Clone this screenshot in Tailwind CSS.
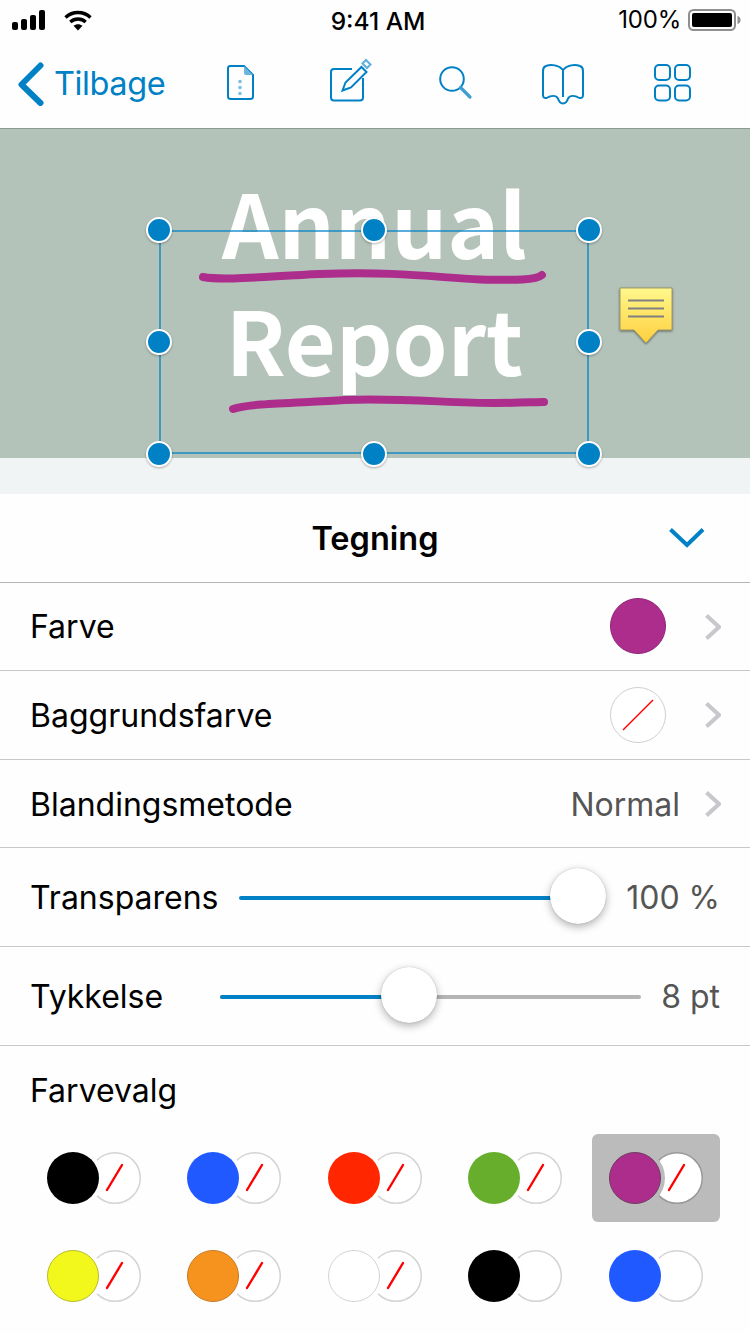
<!DOCTYPE html>
<html>
<head>
<meta charset="utf-8">
<script src="https://cdn.jsdelivr.net/npm/@tailwindcss/browser@4"></script>
</head>
<body class="m-0 bg-[#fefefe]">
<div class="w-[750px] h-[1334px] overflow-hidden flex flex-col bg-[#fefefe] text-black font-['Inter','Liberation_Sans',sans-serif]">

  <!-- Status bar -->
  <div class="h-[40px] shrink-0 relative flex items-center justify-between pl-[12px] pr-[8px]">
    <div class="flex items-center gap-[18px]">
      <svg width="34" height="20" viewBox="0 0 34 20" fill="#000"><rect x="0" y="12" width="6" height="8" rx="2"/><rect x="9" y="9" width="6" height="11" rx="2"/><rect x="18" y="5" width="6" height="15" rx="2"/><rect x="27" y="0" width="6" height="20" rx="2"/></svg>
      <svg width="28" height="21" viewBox="0 0 28 21" fill="none" stroke="#000" stroke-width="3.4"><path d="M1.5 7.5C8.5 .8 19.5 .8 26.5 7.5"/><path d="M6.3 12C10.6 8 17.4 8 21.700 12"/><path d="M14 20.500L9.500 15.800C12 13.600 16 13.600 18.500 15.800Z" fill="#000" stroke="none"/></svg>
    </div>
    <div class="absolute left-[6px] right-0 top-[7px] text-center text-[24.500px] leading-[28px] font-medium">9:41 AM</div>
    <div class="flex items-center gap-[7px]">
      <span class="text-[24px] leading-[28px] tracking-[-0.2px]">100%</span>
      <svg width="54" height="24" viewBox="0 0 54 24"><rect x="1" y="2" width="46" height="20" rx="4.500" fill="none" stroke="#8f8f8f" stroke-width="2"/><rect x="4" y="5" width="40" height="14" rx="2" fill="#000"/><path d="M49.500 8c2 .4 3 2 3 4s-1 3.600-3 4z" fill="#8f8f8f"/></svg>
    </div>
  </div>

  <!-- Nav bar -->
  <div class="h-[89px] shrink-0 relative border-b border-[#8d9a92] text-[#0081c6]">
    <div class="flex items-center h-[88px] pl-[18px]">
      <svg width="26" height="44" viewBox="0 0 26 44" fill="none" stroke="#0081c6" stroke-width="6" stroke-linecap="round" stroke-linejoin="round" class="shrink-0"><path d="M22.500 3.500L3.500 22.500 22.500 41"/></svg>
      <span class="ml-[10px] text-[32.500px] leading-[44px] font-normal tracking-[-0.4px]">Tilbage</span>
    </div>
    <svg width="750" height="88" viewBox="0 0 750 88" fill="none" class="absolute left-0 top-0">
      <g stroke="#0081c6" stroke-width="2">
        <!-- document -->
        <path d="M230 26H244L253 35V56.500Q253 59 250 59H231Q228 59 228 56.500V28.500Q228 26 230 26Z"/>
        <path d="M244 26L253 35H246Q244 35 244 33Z" fill="#6db6de" stroke="none"/>
        <circle cx="240" cy="41.500" r="1.800" fill="#7cbde0" stroke="none"/><circle cx="240" cy="47.500" r="1.800" fill="#7cbde0" stroke="none"/><circle cx="240" cy="53.500" r="1.800" fill="#7cbde0" stroke="none"/>
        <!-- edit -->
        <path d="M352 29H334Q331 29 331 32V57.500Q331 60.500 334 60.500H360Q363 60.500 363 57.500V38"/>
        <path d="M342.500 50.500L345.500 42.500 361.500 27 366.500 32 351 47.500Z"/>
        <path d="M362.500 23.500L366 20 370.500 24.500 367 28Z" stroke="#5fb0dc"/>
        <!-- search -->
        <circle cx="452" cy="39" r="11.800"/>
        <path d="M460.500 47.500L470 57" stroke-width="3.200" stroke="#3f9dd2" stroke-linecap="round"/>
        <!-- book -->
        <path d="M563 30C559 25 551 24 546 26Q543 27 543 31V55Q543 58.500 546.500 58C551 55.500 556 55 558 58.500C559 62 560 63.500 563 63.500C566 63.500 567 62 568 58.500C570 55 575 55.500 579.500 58Q583 58.500 583 55V31Q583 27 580 26C575 24 567 25 563 30ZM563 30V57"/>
        <!-- grid -->
        <rect x="655" y="25" width="15" height="15" rx="4"/><rect x="675" y="25" width="15" height="15" rx="4"/><rect x="655" y="45.500" width="15" height="15" rx="4"/><rect x="675" y="45.500" width="15" height="15" rx="4"/>
      </g>
    </svg>
  </div>

  <!-- Canvas -->
  <div class="h-[329px] shrink-0 relative bg-[#b4c3b9] z-10">
    <div class="absolute left-[0px] w-[750px] top-[33px] text-center text-white font-bold text-[88px] leading-[117px] font-['Noto_Sans_CJK_SC','Noto_Sans',sans-serif]">
      <div class="ml-[-1px]">Annual</div>
      <div class="ml-[-1px]">Report</div>
    </div>
    <svg width="750" height="360" viewBox="0 129 750 360" fill="none" class="absolute left-0 top-0 overflow-visible">
      <defs>
        <linearGradient id="note" x1="0" y1="0" x2="0" y2="1"><stop offset="0" stop-color="#fff88c"/><stop offset="1" stop-color="#ffcf3d"/></linearGradient>
      </defs>
      <path d="M203 277C225 281 270 276 320 274C400 271 440 278 480 279.500C510 280 535 281 542 275" stroke="#ad2d8d" stroke-width="8" stroke-linecap="round"/>
      <path d="M233 409C250 403 300 403 345 400C400 398 450 403 495 403C520 403 535 402 544 402" stroke="#ad2d8d" stroke-width="8" stroke-linecap="round"/>
      <rect x="160" y="231" width="428" height="222" stroke="#0081c6" stroke-opacity=".65" stroke-width="2"/>
      <!-- note -->
      <path d="M620 288H672V330H658L646 343 634 330H620Z" fill="url(#note)" stroke="#a09a6a" stroke-width="1" stroke-linejoin="round" style="filter:drop-shadow(0 1px 1px rgba(0,0,0,.45))"/>
      <path d="M628 300.500H664M628 308.500H664M628 316.500H664" stroke="#808080" stroke-width="2"/>
      <g fill="#0081c6" stroke="#fff" stroke-width="2" style="filter:drop-shadow(0 1px 1px rgba(0,0,0,.3))">
        <circle cx="159" cy="230" r="12"/><circle cx="374" cy="230" r="12"/><circle cx="589" cy="230" r="12"/>
        <circle cx="159" cy="342" r="12"/><circle cx="589" cy="342" r="12"/>
        <circle cx="159" cy="454" r="12"/><circle cx="374" cy="454" r="12"/><circle cx="589" cy="454" r="12"/>
      </g>
    </svg>
  </div>

  <div class="h-[36px] shrink-0 bg-[#f1f4f5]"></div>

  <!-- Panel header -->
  <div class="h-[89px] shrink-0 relative flex items-center justify-center border-b border-[#b5b5b5]">
    <span class="mt-[2px] text-[32.500px] leading-[40px] font-semibold">Tegning</span>
    <svg width="36" height="20" viewBox="0 0 36 20" fill="none" stroke="#0081c6" stroke-width="4" class="absolute left-[669px] top-[34px]"><path d="M1.500 1.500L18 17 34 1.500"/></svg>
  </div>

  <!-- Rows -->
  <div class="h-[88px] shrink-0 flex items-center pl-[30px] pr-[29px] border-b border-[#c8c7cc]">
    <span class="flex-1 text-[32px] leading-[40px]">Farve</span>
    <span class="w-[56px] h-[56px] -mt-[1px] rounded-full bg-[#ad2d8d] border border-[#8f2575]"></span>
    <svg width="16" height="26" viewBox="0 0 16 26" fill="none" stroke="#c8c8cc" stroke-width="4" class="ml-[39px]"><path d="M1.500 1.500L14 13 1.500 24.500"/></svg>
  </div>
  <div class="h-[89px] shrink-0 flex items-center pl-[30px] pr-[29px] border-b border-[#c8c7cc]">
    <span class="flex-1 mt-[2px] text-[32px] leading-[40px]">Baggrundsfarve</span>
    <svg width="56" height="56" viewBox="0 0 56 56" fill="#fff"><circle cx="28" cy="28" r="27.500" stroke="#cfcfcf" stroke-width="1"/><path d="M13 43L43 13" stroke="#ff0000" stroke-width="1.500"/></svg>
    <svg width="16" height="26" viewBox="0 0 16 26" fill="none" stroke="#c8c8cc" stroke-width="4" class="ml-[39px]"><path d="M1.500 1.500L14 13 1.500 24.500"/></svg>
  </div>
  <div class="h-[88px] shrink-0 flex items-center pl-[30px] pr-[29px] border-b border-[#c8c7cc]">
    <span class="flex-1 mt-[2px] text-[32px] leading-[40px]">Blandingsmetode</span>
    <span class="mt-[2px] text-[32px] leading-[40px] text-[#555555]">Normal</span>
    <svg width="16" height="26" viewBox="0 0 16 26" fill="none" stroke="#c8c8cc" stroke-width="4" class="ml-[25px]"><path d="M1.500 1.500L14 13 1.500 24.500"/></svg>
  </div>
  <div class="h-[99px] shrink-0 flex items-center pl-[30px] pr-[30px] border-b border-[#c8c7cc]">
    <span class="w-[209px] mt-[2px] text-[32px] leading-[40px]">Transparens</span>
    <div class="relative w-[339px] mt-[2px] h-[4px] rounded-full bg-[#0081c6]">
      <span class="absolute right-[-28px] top-[-28px] w-[56px] h-[56px] rounded-full bg-white shadow-[0_3px_8px_rgba(0,0,0,0.3),0_0_1px_rgba(0,0,0,0.3)]"></span>
    </div>
    <span class="flex-1 mt-[2px] text-right text-[32px] leading-[40px] text-[#555555]">100 %</span>
  </div>
  <div class="h-[99px] shrink-0 flex items-center pl-[30px] pr-[30px] border-b border-[#c8c7cc]">
    <span class="w-[190px] mt-[2px] text-[32px] leading-[40px]">Tykkelse</span>
    <div class="relative w-[421px] mt-[2px] h-[4px] rounded-full bg-[#b5b5b5]">
      <div class="w-[189px] h-[4px] rounded-full bg-[#0081c6]"></div>
      <span class="absolute left-[161px] top-[-28px] w-[56px] h-[56px] rounded-full bg-white shadow-[0_3px_8px_rgba(0,0,0,0.3),0_0_1px_rgba(0,0,0,0.3)]"></span>
    </div>
    <span class="flex-1 mt-[2px] text-right text-[32px] leading-[40px] text-[#555555]">8 pt</span>
  </div>

  <!-- Farvevalg -->
  <div class="pl-[30px] pt-[25px] h-[88px] shrink-0 text-[32px] leading-[40px]">Farvevalg</div>
  <div class="grid grid-cols-5 gap-x-[12.500px] gap-y-[10px] pl-[29.500px] pr-[30.500px]">
    <div class="h-[88px] rounded-[6px] flex items-center justify-center">
      <span class="relative z-10 w-[52px] h-[52px] rounded-full bg-black shadow-[0_0_0_4px_#fefefe]"></span>
      <svg width="52" height="52" viewBox="0 0 52 52" fill="#fff" class="-ml-[10px]"><circle cx="26" cy="26" r="25.250" stroke="#d4d4d4" stroke-width="1.500"/><path d="M18 38L33 13" stroke="#ff0000" stroke-width="2.400" stroke-linecap="round"/></svg>
    </div>
    <div class="h-[88px] rounded-[6px] flex items-center justify-center">
      <span class="relative z-10 w-[52px] h-[52px] rounded-full bg-[#2059ff] shadow-[0_0_0_4px_#fefefe]"></span>
      <svg width="52" height="52" viewBox="0 0 52 52" fill="#fff" class="-ml-[10px]"><circle cx="26" cy="26" r="25.250" stroke="#d4d4d4" stroke-width="1.500"/><path d="M18 38L33 13" stroke="#ff0000" stroke-width="2.400" stroke-linecap="round"/></svg>
    </div>
    <div class="h-[88px] rounded-[6px] flex items-center justify-center">
      <span class="relative z-10 w-[52px] h-[52px] rounded-full bg-[#ff2600] shadow-[0_0_0_4px_#fefefe]"></span>
      <svg width="52" height="52" viewBox="0 0 52 52" fill="#fff" class="-ml-[10px]"><circle cx="26" cy="26" r="25.250" stroke="#d4d4d4" stroke-width="1.500"/><path d="M18 38L33 13" stroke="#ff0000" stroke-width="2.400" stroke-linecap="round"/></svg>
    </div>
    <div class="h-[88px] rounded-[6px] flex items-center justify-center">
      <span class="relative z-10 w-[52px] h-[52px] rounded-full bg-[#67ae2d] shadow-[0_0_0_4px_#fefefe]"></span>
      <svg width="52" height="52" viewBox="0 0 52 52" fill="#fff" class="-ml-[10px]"><circle cx="26" cy="26" r="25.250" stroke="#d4d4d4" stroke-width="1.500"/><path d="M18 38L33 13" stroke="#ff0000" stroke-width="2.400" stroke-linecap="round"/></svg>
    </div>
    <div class="h-[88px] rounded-[6px] flex items-center justify-center bg-[#bbbbbb]">
      <span class="relative z-10 w-[52px] h-[52px] rounded-full bg-[#ad2d8d] border border-[#6f3a62] shadow-[0_0_0_4px_#bbbbbb]"></span>
      <svg width="52" height="52" viewBox="0 0 52 52" fill="#fff" class="-ml-[10px]"><circle cx="26" cy="26" r="25.250" stroke="#999999" stroke-width="1.500"/><path d="M18 38L33 13" stroke="#ff0000" stroke-width="2.400" stroke-linecap="round"/></svg>
    </div>
    <div class="h-[88px] rounded-[6px] flex items-center justify-center">
      <span class="relative z-10 w-[52px] h-[52px] rounded-full bg-[#f3f81c] border border-[#b9bc2a] shadow-[0_0_0_4px_#fefefe]"></span>
      <svg width="52" height="52" viewBox="0 0 52 52" fill="#fff" class="-ml-[10px]"><circle cx="26" cy="26" r="25.250" stroke="#d4d4d4" stroke-width="1.500"/><path d="M18 38L33 13" stroke="#ff0000" stroke-width="2.400" stroke-linecap="round"/></svg>
    </div>
    <div class="h-[88px] rounded-[6px] flex items-center justify-center">
      <span class="relative z-10 w-[52px] h-[52px] rounded-full bg-[#f6921e] border border-[#c87c22] shadow-[0_0_0_4px_#fefefe]"></span>
      <svg width="52" height="52" viewBox="0 0 52 52" fill="#fff" class="-ml-[10px]"><circle cx="26" cy="26" r="25.250" stroke="#d4d4d4" stroke-width="1.500"/><path d="M18 38L33 13" stroke="#ff0000" stroke-width="2.400" stroke-linecap="round"/></svg>
    </div>
    <div class="h-[88px] rounded-[6px] flex items-center justify-center">
      <span class="relative z-10 w-[52px] h-[52px] rounded-full bg-white border border-[#d4d4d4] shadow-[0_0_0_4px_#fefefe]"></span>
      <svg width="52" height="52" viewBox="0 0 52 52" fill="#fff" class="-ml-[10px]"><circle cx="26" cy="26" r="25.250" stroke="#d4d4d4" stroke-width="1.500"/><path d="M18 38L33 13" stroke="#ff0000" stroke-width="2.400" stroke-linecap="round"/></svg>
    </div>
    <div class="h-[88px] rounded-[6px] flex items-center justify-center">
      <span class="relative z-10 w-[52px] h-[52px] rounded-full bg-black shadow-[0_0_0_4px_#fefefe]"></span>
      <svg width="52" height="52" viewBox="0 0 52 52" fill="#fff" class="-ml-[10px]"><circle cx="26" cy="26" r="25.250" stroke="#d4d4d4" stroke-width="1.500"/></svg>
    </div>
    <div class="h-[88px] rounded-[6px] flex items-center justify-center">
      <span class="relative z-10 w-[52px] h-[52px] rounded-full bg-[#2059ff] shadow-[0_0_0_4px_#fefefe]"></span>
      <svg width="52" height="52" viewBox="0 0 52 52" fill="#fff" class="-ml-[10px]"><circle cx="26" cy="26" r="25.250" stroke="#d4d4d4" stroke-width="1.500"/></svg>
    </div>
  </div>
</div>
</body>
</html>
